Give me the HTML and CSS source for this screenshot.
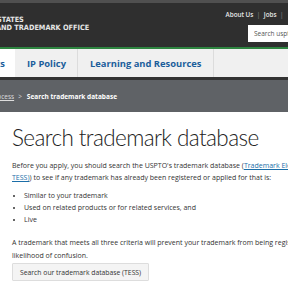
FILE: index.html
```html
<!DOCTYPE html>
<html lang="en">
<head>
    <meta charset="UTF-8">
    <meta name="viewport" content="width=device-width, initial-scale=1.0">
    <title>Search trademark database</title>
    <link rel="stylesheet" href="styles.css">
</head>
<body>
    <header class="top">
        <div class="logo">
            <div class="logo-line first">STATES</div>
            <div class="logo-line second">AND TRADEMARK OFFICE</div>
        </div>
        <div class="utility">
            <div class="util-links">
                <a href="#">About Us</a><span class="sep">|</span><a href="#">Jobs</a><span class="sep">|</span>
            </div>
            <input type="text" class="search" placeholder="Search uspto.gov">
        </div>
    </header>

    <nav class="mainnav">
        <a href="#" class="nav-item active">Trademarks</a>
        <a href="#" class="nav-item">IP Policy</a>
        <a href="#" class="nav-item">Learning and Resources</a>
    </nav>

    <div class="crumbs">
        <a href="#" class="crumb-link">Application process</a>
        <span class="crumb-sep">&gt;</span>
        <span class="crumb-current">Search trademark database</span>
    </div>

    <main class="content">
        <h1>Search trademark database</h1>
        <p>Before you apply, you should search the USPTO's trademark database (<a href="#">Trademark Electronic Search System (<wbr>TESS)</a>) to see if any trademark has already been registered or applied for that is:</p>
        <ul>
            <li>Similar to your trademark</li>
            <li>Used on related products or for related services, and</li>
            <li>Live</li>
        </ul>
        <p class="last">A trademark that meets all three criteria will prevent your trademark from being registered because of a likelihood of confusion.</p>
        <button class="btn">Search our trademark database (TESS)</button>
    </main>
</body>
</html>
```

FILE: styles.css
```css
html, body {
    margin: 0;
    padding: 0;
    overflow: hidden;
}
body {
    width: 288px;
    font-family: 'Open Sans', 'Noto Sans', sans-serif;
    color: #333;
    background: #fff;
}
.top {
    display: flex;
    justify-content: space-between;
    height: 44px;
    background-color: #2f2f2f;
    border-top: 3px solid #505050;
    border-bottom: 2px solid #2e8540;
}
.logo {
    padding-top: 13px;
    color: #e6e6e6;
    font-family: 'DejaVu Sans Condensed', 'DejaVu Sans', sans-serif;
    font-weight: bold;
    font-size: 7.3px;
    line-height: 8px;
    white-space: nowrap;
}
.logo-line.first {
    margin-left: -3px;
}
.logo-line.second {
    margin-left: -4px;
}
.utility {
    display: flex;
    flex-direction: column;
    align-items: flex-end;
    padding-top: 7px;
}
.util-links {
    display: flex;
    align-items: center;
    padding-right: 1px;
    font-size: 6.3px;
    line-height: 10px;
    font-weight: 600;
    white-space: nowrap;
}
.util-links a {
    color: #e8e8e8;
    text-decoration: none;
}
.util-links .sep {
    color: #777;
    margin: 0 3.5px;
}
.search {
    box-sizing: border-box;
    width: 80px;
    height: 17px;
    margin-top: 5px;
    margin-right: -40px;
    padding: 0 6px;
    border: none;
    background: #fff;
    font-family: inherit;
    font-size: 6.5px;
}
.search::placeholder {
    color: #555;
}
.mainnav {
    display: flex;
    height: 28px;
    background-color: #f0f0f0;
    border-bottom: 3px solid #333;
    white-space: nowrap;
}
.nav-item {
    display: flex;
    align-items: center;
    padding: 0 11px 0 12px;
    border-right: 1px solid #dcdcdc;
    color: #1b5e9b;
    font-size: 9.4px;
    font-weight: bold;
    text-decoration: none;
}
.nav-item.active {
    box-sizing: border-box;
    width: 15px;
    flex-shrink: 0;
    justify-content: flex-end;
    padding: 0 10px 0 0;
    overflow: hidden;
    background: #fff;
    border-right: none;
}
.crumbs {
    display: flex;
    align-items: center;
    height: 32px;
    background-color: #5f6266;
    color: #fff;
    font-size: 6.5px;
    white-space: nowrap;
}
.crumb-link {
    color: #ddd;
    margin-left: -45px;
}
.crumb-sep {
    margin: 0 5px 0 4px;
    color: #ddd;
}
.crumb-current {
    font-weight: bold;
}
.content {
    padding: 0 0 0 12px;
    width: 362px;
    font-size: 7px;
    line-height: 12px;
    color: #333;
}
h1 {
    margin: 12px 0 8px;
    font-family: Lato, 'Open Sans', sans-serif;
    font-size: 22.5px;
    line-height: 28px;
    font-weight: 300;
    letter-spacing: -0.6px;
    color: #222;
}
p {
    margin: 0 0 6px;
}
p.last {
    margin-bottom: 1px;
    line-height: 12.5px;
}
p a {
    color: #1b6ea8;
}
ul {
    margin: 0 0 11px;
    padding-left: 12px;
}
.btn {
    display: block;
    height: 18px;
    padding: 0 7px;
    background: #f4f4f4;
    border: 1px solid #ddd;
    border-radius: 1px;
    color: #333;
    font-family: inherit;
    font-size: 6.8px;
}
```
